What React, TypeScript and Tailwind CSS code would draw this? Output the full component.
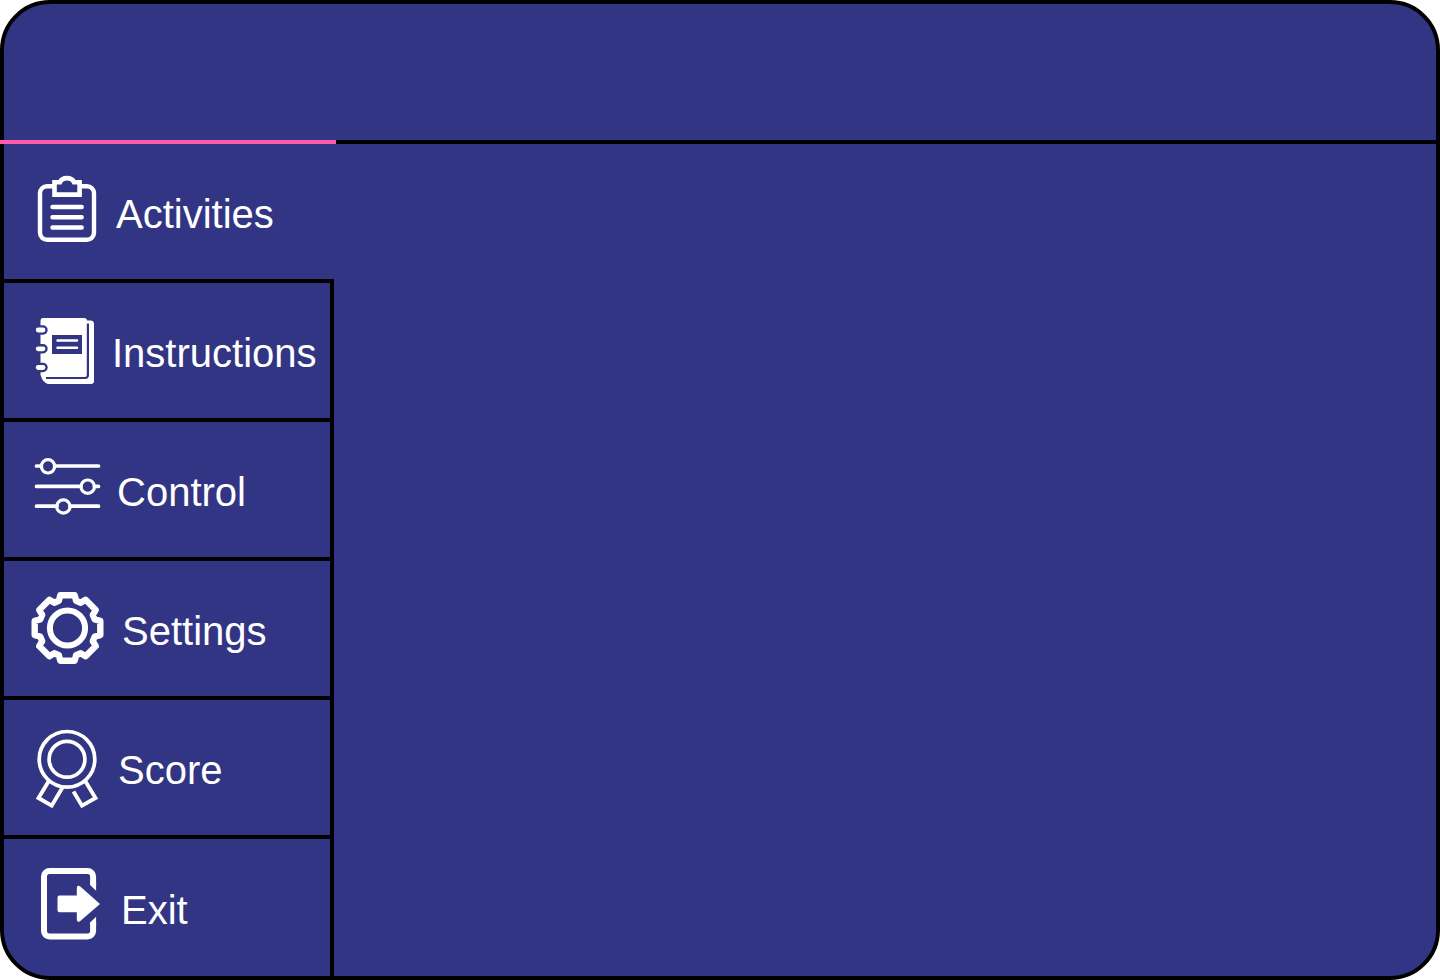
import { useState, type ReactNode } from "react";

type Item = { label: string; icon: ReactNode };

const svgClass = "shrink-0 fill-none stroke-white";

function ClipboardIcon() {
  return (
    <svg width="70" height="91" viewBox="10 1 70 91" className={svgClass} aria-hidden="true">
      <path
        d="M33 21.2H27A7 7 0 0 0 20 28.2V67.8A7 7 0 0 0 27 74.8H67A7 7 0 0 0 74 67.8V28.2A7 7 0 0 0 67 21.2H61"
        strokeWidth="4.4"
      />
      <path d="M34.5 17.2H40C41 14.7 43.5 13.1 47 13.1S53 14.7 54 17.2H59.6V29.6H34.5Z" strokeWidth="4.6" />
      <path d="M32.5 42H61.7M32.5 52.2H61.7M32.5 62.5H61.7" strokeWidth="4.4" strokeLinecap="round" />
    </svg>
  );
}

function NotebookIcon() {
  return (
    <svg width="66" height="91" viewBox="10 0 66 91" className="shrink-0" aria-hidden="true">
      <path
        d="M23 13H64Q67 13 67 15.5H70.5Q74 15.5 74 19V76Q74 79 71 79H28Q23 78 20.5 70V16Q20.5 13 23 13Z"
        className="fill-white"
      />
      <path d="M67.9 18.5V70Q67.9 73 65 73H26" className="fill-none stroke-[#323583]" strokeWidth="2.2" />
      <path d="M32 30H62V49H32Z" className="fill-[#323583]" />
      <path d="M37.5 35.6H57M37.5 42.8H57" className="stroke-white" strokeWidth="2.5" strokeLinecap="round" />
      {[25, 43.8, 62.5].map((y) => (
        <g key={y} strokeLinecap="round">
          <path d={`M18.5 ${y}H23`} className="stroke-[#323583]" strokeWidth="9.4" />
          <path d={`M18.2 ${y}H23`} className="stroke-white" strokeWidth="4.8" />
        </g>
      ))}
    </svg>
  );
}

function SlidersIcon() {
  return (
    <svg width="71" height="91" viewBox="10 -1 71 91" className={svgClass} aria-hidden="true">
      <g strokeWidth="3.7" strokeLinecap="round">
        <path d="M16.5 21H21.5M34.5 21H78.5M16.5 41.4H61M74.5 41.4H78.5M16.5 61.2H37M50 61.2H78.5" />
      </g>
      <g strokeWidth="3.2">
        <circle cx="28" cy="21.3" r="6.7" />
        <circle cx="67.7" cy="41.7" r="6.7" />
        <circle cx="43.4" cy="61.5" r="6.7" />
      </g>
    </svg>
  );
}

const gearTooth = [
  [-8.6, -27.2],
  [-7.2, -32.8],
  [7.2, -32.8],
  [8.6, -27.2],
];

const gearPoints = Array.from({ length: 8 }, (_, i) => {
  const a = (i * Math.PI) / 4;
  return gearTooth
    .map(([x, y]) => `${x * Math.cos(a) - y * Math.sin(a)},${x * Math.sin(a) + y * Math.cos(a)}`)
    .join(" ");
}).join(" ");

function GearIcon() {
  return (
    <svg width="76" height="91" viewBox="10 0 76 91" className={svgClass} aria-hidden="true">
      <g transform="translate(47.5 45)" strokeWidth="6.4" strokeLinejoin="round">
        <polygon points={gearPoints} />
        <circle r="17.6" strokeWidth="6" />
      </g>
    </svg>
  );
}

function RibbonIcon() {
  return (
    <svg width="72" height="91" viewBox="10 0 72 91" className={`${svgClass} overflow-visible`} aria-hidden="true">
      <circle cx="47" cy="37.3" r="27.8" strokeWidth="3.7" />
      <circle cx="47" cy="37.3" r="17.9" strokeWidth="3.7" />
      <path
        d="M28.5 59.5L18.5 76L31.7 83.7L42.5 65.5M65.5 59.5L75.5 76L62 83.7L53.5 69.5"
        strokeWidth="3.9"
      />
    </svg>
  );
}

function ExitIcon() {
  return (
    <svg width="75" height="91" viewBox="10 2 75 91" className="shrink-0 fill-white" aria-hidden="true">
      <path
        d="M73.1 25V16.5A5.5 5.5 0 0 0 67.6 11H29.5A5.5 5.5 0 0 0 24 16.5V71A5.5 5.5 0 0 0 29.5 76.5H67.6A5.5 5.5 0 0 0 73.1 71V62.5"
        className="fill-none stroke-white"
        strokeWidth="6"
      />
      <path d="M70.1 23V24.9L76.1 30.8V23ZM70.1 65V62.6L76.1 56.8V65Z" />
      <path d="M39.5 35.5H56.8V28Q57 24.5 60 26.2L80 44L60 61.3Q57 63 56.8 59.5V52.2H39.5Q37.5 52.2 37.5 50.2V37.5Q37.5 35.5 39.5 35.5Z" />
    </svg>
  );
}

const items: Item[] = [
  { label: "Activities", icon: <ClipboardIcon /> },
  { label: "Instructions", icon: <NotebookIcon /> },
  { label: "Control", icon: <SlidersIcon /> },
  { label: "Settings", icon: <GearIcon /> },
  { label: "Score", icon: <RibbonIcon /> },
  { label: "Exit", icon: <ExitIcon /> },
];

export default function App() {
  const [active, setActive] = useState("Activities");

  return (
    <div className="flex min-h-screen flex-col rounded-[50px] border-4 border-black bg-[#323583] font-['Liberation_Sans',Arial,sans-serif] text-white">
      <header className="relative h-35 shrink-0 border-b-4 border-black">
        <span className="absolute -bottom-1 -left-1 h-1 w-84 bg-[#ff5ba8]" />
      </header>
      <div className="flex flex-1">
        <nav className="flex w-[330px] shrink-0 flex-col">
          {items.map(({ label, icon }, i) => (
            <button
              key={label}
              type="button"
              onClick={() => setActive(label)}
              aria-current={active === label ? "page" : undefined}
              className={`flex items-center gap-4 pl-[26px] text-left text-[40px] leading-10 ${
                i === 0 ? "h-[135px]" : "min-h-[139px] border-t-4 border-black"
              } ${i === items.length - 1 ? "flex-1" : ""} ${active === label ? "" : "border-r-4 border-r-black"}`}
            >
              {icon}
              <span className="pt-1">{label}</span>
            </button>
          ))}
        </nav>
        <main className="flex-1" />
      </div>
    </div>
  );
}
